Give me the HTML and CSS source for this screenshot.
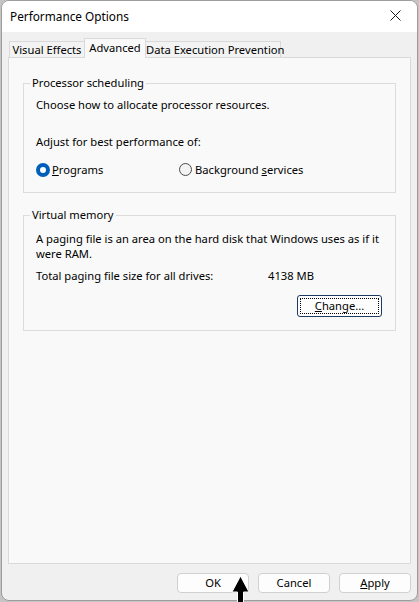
FILE: index.html
```html
<!DOCTYPE html>
<html lang="en">
<head>
<meta charset="utf-8">
<title>Performance Options</title>
<link rel="stylesheet" href="styles.css">
</head>
<body>
<div class="window">
  <div class="titlebar">
    <span class="title">Performance Options</span>
    <svg class="close" width="11" height="11" viewBox="0 0 11 11"><path d="M0.5 0.5 L10.5 10.5 M10.5 0.5 L0.5 10.5" stroke="#1a1a1a" stroke-width="1"/></svg>
  </div>
  <div class="content">
    <div class="tabs">
      <div class="tab tab-ve">Visual Effects</div>
      <div class="tab tab-adv selected">Advanced</div>
      <div class="tab tab-dep">Data Execution Prevention</div>
    </div>
    <div class="panel">
      <fieldset class="group group-proc">
        <legend>Processor scheduling</legend>
        <p class="line first">Choose how to allocate processor resources.</p>
        <p class="line adjust">Adjust for best performance of:</p>
        <div class="radios">
          <label class="radio"><span class="dot on"></span><span><u>P</u>rograms</span></label>
          <label class="radio"><span class="dot"></span><span>Background <u>s</u>ervices</span></label>
        </div>
      </fieldset>
      <fieldset class="group group-vm">
        <legend>Virtual memory</legend>
        <p class="line first">A paging file is an area on the hard disk that Windows uses as if it were RAM.</p>
        <div class="total">
          <span>Total paging file size for all drives:</span>
          <span>4138 MB</span>
        </div>
        <div class="change-row">
          <button class="btn change"><span class="focus"><u>C</u>hange...</span></button>
        </div>
      </fieldset>
    </div>
    <div class="buttons">
      <button class="btn">OK</button>
      <button class="btn">Cancel</button>
      <button class="btn"><u>A</u>pply</button>
    </div>
  </div>
</div>
<svg class="cursor" width="19" height="28" viewBox="0 0 19 28"><polygon points="9.5,1 18,17 12.5,17 12.5,28 6.5,28 6.5,17 1,17" fill="#000" stroke="#fff" stroke-width="1"/></svg>
</body>
</html>
```
FILE: styles.css
```css
* { box-sizing: border-box; }
html, body { margin: 0; padding: 0; }
body {
  width: 419px;
  height: 602px;
  background: #c4c4c4;
  font-family: "Noto Sans", "Open Sans", sans-serif;
  font-size: 11.2px;
  color: #000;
  position: relative;
  overflow: hidden;
}
.window {
  margin-left: 1px;
  width: 417px;
  height: 601px;
  border: 1px solid #9d9d9d;
  border-radius: 8px;
  background: #f0f0f0;
  overflow: hidden;
  display: flex;
  flex-direction: column;
}
.titlebar {
  height: 31px;
  background: #ffffff;
  display: flex;
  align-items: center;
  justify-content: space-between;
  padding: 0 16px 2px 8px;
}
.title { font-size: 11.8px; line-height: 16px; }
.content {
  padding: 6px 6px 0 6px;
  display: flex;
  flex-direction: column;
}
.tabs {
  display: flex;
  align-items: flex-end;
  padding-left: 1px;
  height: 19px;
}
.tab {
  height: 16px;
  border: 1px solid #d9d9d9;
  border-bottom: none;
  background: #f3f3f3;
  text-align: center;
  line-height: 16px;
  white-space: nowrap;
}
.tab-ve { width: 75px; border-right: none; }
.tab-adv { width: 62px; }
.tab-dep { width: 135px; border-left: none; }
.tab.selected {
  height: 20px;
  margin-bottom: -1px;
  background: #f9f9f9;
  line-height: 18px;
  position: relative;
  z-index: 1;
}
.panel {
  height: 507px;
  border: 1px solid #d9d9d9;
  background: #f9f9f9;
  padding: 17px 14px 0 14px;
}
.group {
  margin: 0;
  border: 1px solid #dcdcdc;
  padding: 0 12px;
  min-width: 0;
}
.group legend {
  padding: 0 2px;
  margin-left: -6px;
  line-height: 16px;
}
.line { margin: 0; line-height: 15px; }
.group-proc { padding-bottom: 15px; }
.group-proc .first { margin-top: 6px; }
.group-proc .adjust { margin-top: 22px; }
.radios {
  margin-top: 13px;
  display: grid;
  grid-template-columns: 143px auto;
  line-height: 15px;
}
.radio { display: flex; align-items: center; gap: 3px; }
.dot {
  width: 13px;
  height: 13px;
  border-radius: 50%;
  border: 1px solid #4a4a4a;
  background: #f3f3f3;
  flex: none;
}
.dot.on {
  width: 14px;
  height: 14px;
  border: 4px solid #005fb8;
  background: #ffffff;
  margin-right: -1px;
}
.group-vm { margin-top: 14px; padding-bottom: 13px; padding-right: 8px; }
.group-vm .first { margin-top: 8px; }
.total {
  margin-top: 7px;
  display: grid;
  grid-template-columns: 232px auto;
  line-height: 15px;
}
.change-row {
  display: flex;
  justify-content: flex-end;
  margin-top: 12px;
  margin-right: 5px;
}
.btn {
  font-family: inherit;
  font-size: 11.2px;
  color: #000;
  background: #fdfdfd;
  border: 1px solid #d0d0d0;
  border-radius: 4px;
  width: 72px;
  height: 20px;
  padding: 0;
  line-height: 16px;
}
.btn.change {
  width: 85px;
  height: 22px;
  border: 1px solid #1c3a63;
  border-radius: 3px;
  padding: 2px;
}
.focus {
  display: block;
  height: 100%;
  border: 1px dotted #000;
  line-height: 14px;
}
.buttons {
  display: flex;
  justify-content: flex-end;
  gap: 9px;
  margin-top: 9px;
}
.close { display: block; }
.cursor {
  position: absolute;
  left: 231px;
  top: 575px;
}
```
